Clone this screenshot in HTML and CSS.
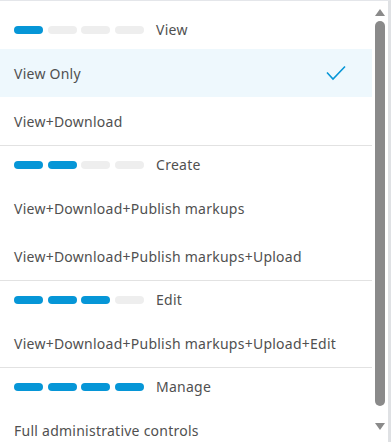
FILE: index.html
```html
<!DOCTYPE html>
<html lang="en">
<head>
  <meta charset="UTF-8">
  <meta name="viewport" content="width=device-width, initial-scale=1.0">
  <title>Permission Level</title>
  <link rel="stylesheet" href="styles.css">
</head>
<body>

  <!-- Permission dropdown -->
  <div class="dropdown">
    <div class="menu">

      <div class="group">
        <div class="group-head">
          <div class="pills"><span class="pill on"></span><span class="pill"></span><span class="pill"></span><span class="pill"></span></div>
          <span class="group-name">View</span>
        </div>
        <div class="option selected">
          <span>View Only</span>
          <svg class="check" width="20" height="16" viewBox="0 0 20 16"><path d="M1 7.5 L7 14 L19 1.5" fill="none" stroke="#0696d7" stroke-width="1.6"/></svg>
        </div>
        <div class="option">View+Download</div>
      </div>

      <div class="group">
        <div class="group-head">
          <div class="pills"><span class="pill on"></span><span class="pill on"></span><span class="pill"></span><span class="pill"></span></div>
          <span class="group-name">Create</span>
        </div>
        <div class="option">View+Download+Publish markups</div>
        <div class="option">View+Download+Publish markups+Upload</div>
      </div>

      <div class="group">
        <div class="group-head">
          <div class="pills"><span class="pill on"></span><span class="pill on"></span><span class="pill on"></span><span class="pill"></span></div>
          <span class="group-name">Edit</span>
        </div>
        <div class="option">View+Download+Publish markups+Upload+Edit</div>
      </div>

      <div class="group">
        <div class="group-head">
          <div class="pills"><span class="pill on"></span><span class="pill on"></span><span class="pill on"></span><span class="pill on"></span></div>
          <span class="group-name">Manage</span>
        </div>
        <div class="option">Full administrative controls</div>
      </div>

    </div>

    <!-- Scrollbar -->
    <div class="scrollbar">
      <span class="arrow up"></span>
      <span class="thumb"></span>
      <span class="arrow down"></span>
    </div>
  </div>

</body>
</html>
```

FILE: styles.css
```css
* {
  box-sizing: border-box;
  margin: 0;
  padding: 0;
}
body {
  font-family: "Noto Sans", Arial, sans-serif;
  font-size: 14px;
  letter-spacing: 0.25px;
  color: #505050;
  background: #fff;
  overflow: hidden;
}
.dropdown {
  display: flex;
  height: 442px;
  border-top: 1px solid #e4e6ea;
  border-right: 3px solid #dfe1e4;
  overflow: hidden;
}
.menu {
  flex: 1;
  padding-top: 10px;
}
.group + .group {
  border-top: 1px solid #e2e2e2;
}
.group-head {
  display: flex;
  align-items: center;
  height: 38px;
  padding: 0 14px;
}
.pills {
  display: flex;
  gap: 4.7px;
}
.pill {
  width: 29px;
  height: 8px;
  border-radius: 4px;
  background: #eeeeee;
}
.pill.on {
  background: #0696d7;
}
.group-name {
  margin-left: 12px;
  line-height: 20px;
}
.option {
  display: flex;
  align-items: center;
  justify-content: space-between;
  height: 48px;
  padding: 0 26px 0 14px;
}
.option.selected {
  background: #eef8fd;
}
.check {
  display: block;
}
.scrollbar {
  width: 16px;
  display: flex;
  flex-direction: column;
  align-items: center;
  padding: 8px 0 12px;
}
.arrow {
  width: 0;
  height: 0;
  border-left: 5px solid transparent;
  border-right: 5px solid transparent;
}
.arrow.up {
  border-bottom: 7px solid #8a8a8a;
}
.arrow.down {
  border-top: 7px solid #8a8a8a;
}
.thumb {
  width: 10px;
  flex: 1;
  margin: 5px 0 17px;
  border-radius: 5px;
  background: #8a8a8a;
}
```
